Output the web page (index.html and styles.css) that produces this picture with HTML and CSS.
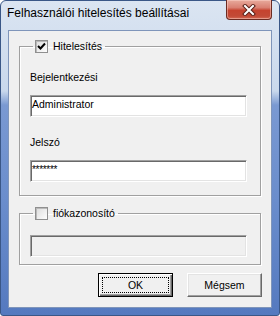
FILE: index.html
```html
<!DOCTYPE html>
<html lang="hu">
<head>
  <meta charset="UTF-8" />
  <title>Felhasználói hitelesítés beállításai</title>
  <link rel="stylesheet" href="styles.css">
</head>
<body>

  <div class="window">
    <div class="titlebar">
      <span class="title">Felhasználói hitelesítés beállításai</span>
      <button class="close" aria-label="Bezárás">
        <svg width="14" height="12" viewBox="0 0 14 12">
          <path d="M3 2 L11 10 M11 2 L3 10" stroke="#5a2018" stroke-width="4" stroke-linecap="square" fill="none"/>
          <path d="M3 2 L11 10 M11 2 L3 10" stroke="#fff" stroke-width="2" stroke-linecap="square" fill="none"/>
        </svg>
      </button>
    </div>

    <div class="client">
      <fieldset class="group">
        <legend>
          <span class="check">
            <svg width="11" height="11" viewBox="0 0 11 11">
              <path d="M2 5 L4.5 7.5 L9 2.5" stroke="#000" stroke-width="2" fill="none"/>
            </svg>
          </span>
          Hitelesítés
        </legend>
        <div class="group-body">
          <div class="field-label first">Bejelentkezési</div>
          <div class="textbox">Administrator</div>
          <div class="field-label">Jelszó</div>
          <div class="textbox password">*******</div>
        </div>
      </fieldset>

      <fieldset class="group group-id">
        <legend>
          <span class="check"></span>
          fiókazonosító
        </legend>
        <div class="group-body">
          <div class="textbox disabled"></div>
        </div>
      </fieldset>

      <div class="buttons">
        <button class="btn btn-default"><span class="focus">OK</span></button>
        <button class="btn">Mégsem</button>
      </div>
    </div>
  </div>

</body>
</html>
```

FILE: styles.css
```css
* {
  margin: 0;
  padding: 0;
  box-sizing: border-box;
}

body {
  width: 280px;
  height: 316px;
  overflow: hidden;
  background: #fff;
  font-family: "Liberation Sans", Arial, sans-serif;
  font-size: 10.5px;
  color: #000;
}

/* window frame */
.window {
  height: 316px;
  display: flex;
  flex-direction: column;
  padding: 0 7px 7px 7px;
  border: 1px solid #3a5787;
  border-radius: 6px 6px 3px 3px;
  background: linear-gradient(to bottom, #dbe5f2 0px, #c9d8ec 90px, #7a99d2 104px, #6a8dcc 200px, #5479bf 316px);
}

.titlebar {
  height: 29px;
  display: flex;
  align-items: flex-start;
}

.title {
  margin-left: -1px;
  padding-top: 5px;
  font-size: 12px;
  line-height: 14px;
  color: #000;
}

.close {
  margin-left: auto;
  margin-top: -1px;
  width: 46px;
  height: 20px;
  border: 1px solid #6b2b22;
  border-top: none;
  border-radius: 0 0 4px 4px;
  background: linear-gradient(to bottom, #e8aa9c 0%, #d98072 40%, #c5432f 55%, #c24a36 85%, #d46a55 100%);
  box-shadow: inset 0 0 0 1px rgba(255, 220, 210, 0.45);
  display: flex;
  align-items: center;
  justify-content: center;
}

/* client area */
.client {
  flex: 1;
  background: #f0f0f0;
  border: 1px solid #7f95ba;
  padding: 9px 10px 0 10px;
}

.group {
  border: 1px solid #a0a0a0;
  box-shadow: 1px 1px 0 #fff, inset 1px 1px 0 #fff;
  padding: 0;
}

.group legend {
  margin-left: 13px;
  padding: 0 3px 0 2px;
  height: 13px;
  line-height: 13px;
  display: flex;
  align-items: center;
  gap: 5px;
}

.check {
  width: 13px;
  height: 13px;
  border: 1px solid #8f8f8f;
  background: linear-gradient(135deg, #dcdcdc, #fdfdfd);
  box-shadow: inset 1px 1px 0 #b9b9b9;
  display: flex;
  align-items: center;
  justify-content: center;
}

.group-body {
  padding: 0 13px 13px 10px;
}

.field-label {
  line-height: 13px;
  margin-top: 19px;
  margin-bottom: 11px;
}

.field-label.first {
  margin-top: 18px;
}

.textbox {
  height: 22px;
  padding: 2px 0 0 1px;
  line-height: 13px;
  background: #fff;
  border: 1px solid;
  border-color: #a0a0a0 #fff #fff #a0a0a0;
  box-shadow: inset 1px 1px 0 #696969, inset -1px -1px 0 #e3e3e3;
}

.textbox.password {
  font-size: 10px;
  letter-spacing: -0.3px;
}

.textbox.disabled {
  background: #f0f0f0;
}

.group-id {
  margin-top: 11px;
}

.group-id .group-body {
  padding-top: 15px;
  padding-bottom: 7px;
}

/* buttons */
.buttons {
  display: flex;
  justify-content: flex-end;
  gap: 14px;
  margin-top: 8px;
  margin-right: -1px;
}

.btn {
  width: 75px;
  height: 24px;
  font-family: inherit;
  font-size: 10.5px;
  color: #000;
  background: #f0f0f0;
  border: 1px solid;
  border-color: #fff #696969 #696969 #fff;
  box-shadow: inset -1px -1px 0 #a0a0a0, inset 1px 1px 0 #e3e3e3;
  display: flex;
  align-items: center;
  justify-content: center;
}

.btn-default {
  border: 1px solid #000;
  box-shadow: inset 1px 1px 0 #fff, inset -1px -1px 0 #696969, inset -2px -2px 0 #a0a0a0;
  padding: 3px;
}

.btn-default .focus {
  flex: 1;
  align-self: stretch;
  border: 1px dotted #000;
  display: flex;
  align-items: center;
  justify-content: center;
}
```
